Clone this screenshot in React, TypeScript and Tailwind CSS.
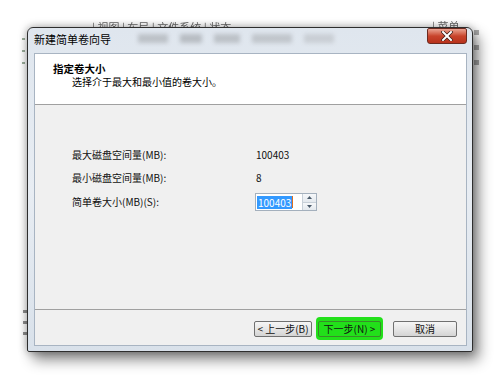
import React from "react";

const cjk = { fontFamily: '"Noto Sans CJK SC", "Noto Sans", sans-serif' };

function Btn({ children, w }: { children: React.ReactNode; w: string }) {
  return (
    <div
      className={`${w} h-[16px] flex items-center justify-center rounded-[2px] border border-[#707070] bg-gradient-to-b from-[#f6f6f6] via-[#e6e6e6] to-[#d4d4d4] text-[10px] leading-none text-[#111]`}
    >
      {children}
    </div>
  );
}

export default function App() {
  return (
    <div className="relative w-[500px] h-[380px] overflow-hidden bg-white" style={cjk}>
      {/* blurred background desktop content */}
      <div className="absolute left-[92px] top-[22px] text-[11px] leading-none text-[#666] blur-[0.5px]">
        | 视图 | 布局 | 文件系统 | 状态
      </div>
      <div className="absolute left-[432px] top-[21px] text-[11px] leading-none text-[#666] blur-[0.5px]">| 菜单</div>
      <div className="absolute left-[22px] top-[38px] w-[3px] h-[36px] flex flex-col gap-[10px] blur-[0.6px] opacity-60">
        <div className="h-[2px] bg-[#5a7a5a]" />
        <div className="h-[2px] bg-[#5a7a5a]" />
        <div className="h-[2px] bg-[#5a7a5a]" />
      </div>
      <div className="absolute left-[23px] top-[310px] w-[4px] h-[36px] flex flex-col gap-[8px] blur-[0.6px] opacity-60">
        <div className="h-[3px] bg-[#444]" />
        <div className="h-[3px] bg-[#444]" />
        <div className="h-[3px] bg-[#444]" />
      </div>
      <div className="absolute left-[474px] top-[30px] w-[5px] h-[45px] flex flex-col gap-[10px] blur-[0.6px] opacity-60">
        <div className="h-[5px] bg-[#777]" />
        <div className="h-[5px] bg-[#777]" />
        <div className="h-[5px] bg-[#777]" />
      </div>

      {/* window */}
      <div className="absolute left-[27px] top-[27px] w-[446px] h-[325px] flex flex-col rounded-t-[6px] rounded-b-[2px] border border-[#2e2e2e] bg-gradient-to-b from-[#dfe6ee] via-[#e8edf3] to-[#d9e1ea] shadow-[0_0_8px_rgba(0,0,0,0.35),6px_8px_14px_rgba(0,0,0,0.45)]">
        {/* title bar */}
        <div className="relative h-[25px] flex items-start justify-between pl-[6px] pr-[5px]">
          <div className="absolute left-[110px] top-[6px] w-[260px] h-[9px] flex gap-[12px] opacity-25 blur-[2px]">
            <div className="w-[30px] bg-[#555]" />
            <div className="w-[22px] bg-[#444]" />
            <div className="w-[26px] bg-[#555]" />
            <div className="w-[40px] bg-[#666]" />
            <div className="w-[30px] bg-[#888]" />
          </div>
          <span className="relative mt-[5px] text-[11px] leading-[13px] text-black">新建简单卷向导</span>
          <div className="relative w-[40px] h-[16px] rounded-b-[3px] rounded-t-[2px] border border-[#6b2a20] bg-gradient-to-b from-[#e9a392] via-[#c8442c] to-[#b8321c] flex items-center justify-center">
            <svg width="12" height="10" viewBox="0 0 12 10">
              <path d="M2 1 L10 9 M10 1 L2 9" stroke="#3b1a14" strokeWidth="3.4" strokeLinecap="square" />
              <path d="M2 1 L10 9 M10 1 L2 9" stroke="#ffffff" strokeWidth="2" strokeLinecap="square" />
            </svg>
          </div>
        </div>

        {/* client */}
        <div className="mx-[6px] mr-[5px] flex-1 flex flex-col border border-[#a8b4c2] bg-[#f0f0f0]">
          <div className="h-[51px] bg-white border-b border-[#a0a0a0] pl-[18px] pt-[8px]">
            <div className="text-[10.5px] leading-[13px] font-bold text-black">指定卷大小</div>
            <div className="pl-[19px] text-[10px] leading-[13px] text-black">选择介于最大和最小值的卷大小。</div>
          </div>

          <div className="flex-1 pl-[37px] pt-[42px] text-[10px] leading-[16px] text-[#111]">
            <div className="flex items-center h-[16px]">
              <span className="w-[184px]">最大磁盘空间量(MB):</span>
              <span>100403</span>
            </div>
            <div className="flex items-center h-[16px] mt-[7px]">
              <span className="w-[184px]">最小磁盘空间量(MB):</span>
              <span>8</span>
            </div>
            <div className="flex items-center h-[18px] mt-[7px]">
              <span className="w-[183px]">简单卷大小(MB)(S):</span>
              <div className="w-[62px] h-[18px] flex items-center border border-[#a4b0bd] bg-white">
                <span className="ml-[1px] bg-[#3399ff] text-white px-[1px] leading-[13px]">100403</span>
                <span className="w-[1px] h-[12px] bg-[#e07020]" />
                <div className="ml-auto w-[14px] h-full flex flex-col border-l border-[#c8d0d8]">
                  <div className="flex-1 flex items-center justify-center bg-gradient-to-b from-[#f6f8fa] to-[#e4e9ee] border-b border-[#c8d0d8]">
                    <svg width="5" height="3" viewBox="0 0 5 3"><path d="M0 3 L2.5 0 L5 3 Z" fill="#4a5a6a" /></svg>
                  </div>
                  <div className="flex-1 flex items-center justify-center bg-gradient-to-b from-[#f6f8fa] to-[#e4e9ee]">
                    <svg width="5" height="3" viewBox="0 0 5 3"><path d="M0 0 L5 0 L2.5 3 Z" fill="#4a5a6a" /></svg>
                  </div>
                </div>
              </div>
            </div>
          </div>

          <div className="h-[36px] border-t border-[#a0a0a0] flex items-start pt-[11px] pl-[219px]">
            <Btn w="w-[58px]">&lt; 上一步(B)</Btn>
            <div className="ml-[4px] -mt-[4px] w-[67px] h-[23px] rounded-[4px] bg-[#22e01a] flex items-center justify-center">
              <div className="w-[63px] h-[16px] rounded-[2px] border border-[#3a8a2a] flex items-center justify-center text-[10px] leading-none text-[#111]">
                下一步(N) &gt;
              </div>
            </div>
            <div className="ml-[10px]">
              <Btn w="w-[64px]">取消</Btn>
            </div>
          </div>
        </div>
        <div className="h-[5px]" />
      </div>
    </div>
  );
}
